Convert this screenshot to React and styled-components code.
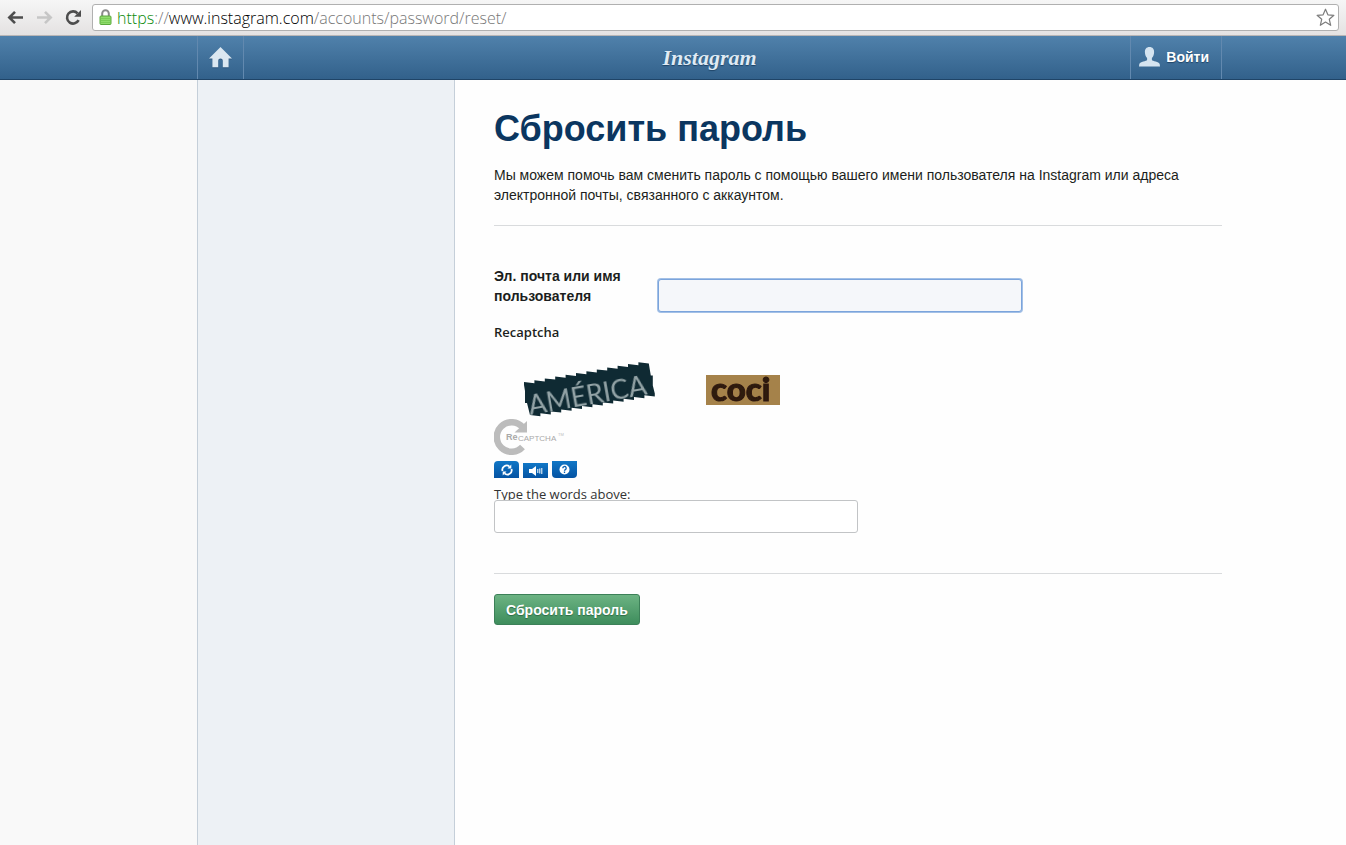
import React, { useState } from 'react';
import styled, { createGlobalStyle } from 'styled-components';

const GlobalStyle = createGlobalStyle`
    * {
        box-sizing: border-box;
    }
    html, body, #root {
        height: 100%;
    }
    body {
        margin: 0;
        color: #1c1e20;
        background-color: #fefefe;
        font-family: 'Liberation Sans', Arial, sans-serif;
        font-size: 14px;
        line-height: 20px;
    }
`;
const Page = styled.div`
    display: flex;
    flex-direction: column;
    min-height: 100%;
`;

/* Browser toolbar */
const Toolbar = styled.div`
    display: flex;
    align-items: center;
    height: 36px;
    padding: 0 7px;
    background: linear-gradient(#f6f6f6, #e4e2e2);
    border-bottom: 1px solid #b9b6b6;
`;
const ToolGroup = styled.div`
    display: flex;
    gap: 12px;
    padding-right: 10px;
`;
const ToolButton = styled.button`
    display: flex;
    width: 17px;
    height: 17px;
    padding: 0;
    border: 0;
    background: none;
    color: ${(props) => (props.disabled ? '#c6c6c6' : '#4d4d4d')};
`;
const AddressBar = styled.div`
    display: flex;
    flex: 1;
    align-items: center;
    height: 27px;
    padding: 0 3px 0 6px;
    border: 1px solid #b0b0b0;
    border-radius: 3px;
    background-color: #fff;
`;
const Url = styled.div`
    flex: 1;
    padding-left: 5px;
    color: #777;
    font-family: 'Open Sans', 'Noto Sans', sans-serif;
    font-size: 16px;
    font-weight: 300;
`;
const Scheme = styled.span`
    color: #0a8a0a;
`;
const Host = styled.span`
    color: #000;
`;
const StarButton = styled.button`
    display: flex;
    padding: 0;
    border: 0;
    background: none;
`;

/* Site header */
const Header = styled.header`
    display: grid;
    grid-template-columns: minmax(0, 197fr) minmax(0, 1025px) minmax(0, 124fr);
    height: 44px;
    background: linear-gradient(#5081ab, #32618b);
    border-bottom: 1px solid #1f4467;
`;
const Nav = styled.nav`
    display: grid;
    grid-column: 2;
    grid-template-columns: 1fr auto 1fr;
    align-items: center;
`;
const NavLink = styled.a`
    display: flex;
    align-items: center;
    justify-self: ${(props) => (props.$right ? 'end' : 'start')};
    gap: 6px;
    height: 43px;
    padding: ${(props) => (props.$right ? '0 12px 2px 8px' : '0 11px')};
    border: solid #6289af;
    border-width: 0 1px;
    color: #fff;
    font-weight: bold;
    text-decoration: none;
    text-shadow: 0 1px 1px #1f4467;
`;
const Brand = styled.a`
    color: #dfeaf4;
    font-family: 'Liberation Serif', 'Times New Roman', serif;
    font-size: 22px;
    font-style: italic;
    font-weight: bold;
    line-height: 36px;
    text-decoration: none;
    text-shadow: 0 1px 1px #1f4467;
`;

/* Columns */
const Body = styled.div`
    display: grid;
    flex: 1;
    grid-template-columns: minmax(0, 197fr) minmax(0, 258px) minmax(0, 767px) minmax(0, 124fr);
`;
const Gutter = styled.div`
    background-color: #f9f9f9;
`;
const Sidebar = styled.aside`
    border: solid #c5cfd9;
    border-width: 0 1px;
    background-color: #edf1f5;
`;
const Main = styled.main`
    padding: 29px 0 40px 39px;
`;
const Title = styled.h1`
    margin: 0 0 16px;
    color: #0b3660;
    font-size: 36px;
    line-height: 40px;
`;
const Intro = styled.p`
    margin: 0;
`;
const Form = styled.form`
    margin-top: 20px;
    border-top: 1px solid #d9dbdd;
`;
const Fields = styled.div`
    display: flex;
    flex-direction: column;
    padding: 40px 0;
    border-bottom: 1px solid #d9dbdd;
`;
const FieldRow = styled.div`
    display: grid;
    grid-template-columns: 164px minmax(0, 364px);
    margin-bottom: 10px;
`;
const Label = styled.label`
    padding-right: 24px;
    font-weight: bold;
`;
const Input = styled.input`
    width: 100%;
    max-width: 364px;
    height: 33px;
    padding: 0 8px;
    border: 1px solid #c2c4c6;
    border-radius: 3px;
    background-color: #fff;
    font: inherit;
    outline: 0;
`;
const MainInput = styled(Input)`
    margin-top: 13px;
    border-color: #7ba4dc;
    background-color: #f5f7fa;
    box-shadow: 0 0 0 1px #a3c0e6;
`;
const CaptchaTitle = styled.div`
    font-family: 'Open Sans', sans-serif;
    font-size: 13px;
    font-weight: 600;
`;
const CaptchaImage = styled.svg`
    display: block;
    margin-top: 18px;
`;
const CaptchaLogo = styled.svg`
    display: block;
    margin-top: 2px;
`;
const CaptchaTools = styled.div`
    display: flex;
    align-items: flex-end;
    gap: 4px;
    margin-top: 6px;
`;
const CaptchaButton = styled.button`
    display: flex;
    align-items: center;
    justify-content: center;
    width: 25px;
    height: ${(props) => (props.$short ? '15px' : '17px')};
    padding: 0;
    border: 0;
    border-radius: ${(props) => props.$radius || '0'};
    background: linear-gradient(#1177c6, #0453a3);
`;
const CaptchaLabel = styled.label`
    height: 15px;
    margin-top: 7px;
    color: #333;
    font-family: 'Open Sans', sans-serif;
    font-size: 13px;
    line-height: 18px;
`;
const Submit = styled.button`
    height: 31px;
    margin-top: 20px;
    padding: 0 11px;
    border: 1px solid #3c8058;
    border-radius: 3px;
    background: linear-gradient(#6cb383, #3e8d5c);
    color: #fff;
    font: bold 14px 'Liberation Sans', Arial, sans-serif;
    text-shadow: 0 1px 1px #2c6b45;
`;

function BackIcon({ flip }) {
    return (
        <svg width="17" height="17" viewBox="0 0 17 17" fill="none" stroke="currentColor" strokeWidth="2.6">
            <path d={flip ? 'M1 8.5h13M9 2.8l5.7 5.7L9 14.2' : 'M16 8.5H3M8 2.8L2.3 8.5 8 14.2'} />
        </svg>
    );
}

function ReloadIcon() {
    return (
        <svg width="17" height="17" viewBox="0 0 17 17">
            <path d="M13.6 11.2A6.1 6.1 0 1 1 12.6 4.3" fill="none" stroke="currentColor" strokeWidth="2.6" />
            <path d="M16 1v6.8H9.2z" fill="currentColor" />
        </svg>
    );
}

function LockIcon() {
    return (
        <svg width="13" height="17" viewBox="0 0 13 17">
            <path d="M3.2 8V4.6a3.3 3.3 0 0 1 6.6 0V8" fill="none" stroke="#8b8b8b" strokeWidth="2" />
            <rect x="1" y="7" width="11" height="8.5" rx="1" fill="#8fdc6c" stroke="#5aa83c" />
            <path d="M2 9.5h9M2 11.5h9M2 13.5h9" stroke="#70c44e" strokeWidth=".7" />
        </svg>
    );
}

function StarIcon() {
    return (
        <svg width="19" height="19" viewBox="0 0 19 19">
            <path
                d="M9.5 1.2l2.4 5.6 6 .5-4.6 4 1.4 6-5.2-3.2-5.2 3.2 1.4-6-4.6-4 6-.5z"
                fill="#fff"
                stroke="#7c7c7c"
                strokeWidth="1.2"
                strokeLinejoin="round"
            />
        </svg>
    );
}

function HomeIcon() {
    return (
        <svg width="23" height="22" viewBox="0 0 23 22">
            <path d="M11.5 1L0 12.5h3.4V21.200h5.800v-6.400a2.300 2.300 0 0 1 4.600 0v6.400h5.800v-8.700H23z" fill="#1f4467" opacity=".5" />
            <path d="M11.5 0L0 11.5h3.4V20.2h5.8v-6.4a2.3 2.3 0 0 1 4.6 0v6.4h5.8v-8.7H23z" fill="#dbe7f1" />
        </svg>
    );
}

function UserIcon() {
    return (
        <svg width="21" height="20" viewBox="0 0 21 20">
            <path
                d="M10.5 0C7.3 0 5.8 2.2 5.9 5.2c.1 2.6 1 4.5 2.2 5.8v2C7.6 14.3 1 14.6.3 17L0 19.4h21l-.3-2.4c-.7-2.4-7.3-2.7-7.8-4v-2c1.2-1.3 2.1-3.2 2.2-5.8C15.2 2.2 13.7 0 10.5 0z"
                fill="#d5e4f0"
            />
        </svg>
    );
}

// the strip is cut in twelve teeth on both long sides
const strip = `M30 25${'v-3l10.4 1.2'.repeat(12)}l2 12h2v10l2 8${'v3l-10.4-1.200'.repeat(12)}l-3-12h-2v-12z`;

function Captcha() {
    return (
        <CaptchaImage width="300" height="57" viewBox="0 0 300 57" role="img" aria-label="Recaptcha challenge">
            <defs>
                <filter id="soft">
                    <feGaussianBlur stdDeviation="0.7" />
                </filter>
            </defs>
            <path d={strip} fill="#0f2a33" />
            <g transform="translate(36 55) rotate(-10)">
                <text fill="#93a3a6" fontFamily="Lato" fontSize="27" filter="url(#soft)">
                    AMÉRICA
                </text>
            </g>
            <rect x="212" y="15" width="74" height="30" fill="#a5824a" />
            <text x="217" y="41" fill="#2e1a10" stroke="#2e1a10" fontFamily="Lato" fontSize="33" fontWeight="900" filter="url(#soft)">
                coci
            </text>
        </CaptchaImage>
    );
}

function RecaptchaLogo() {
    return (
        <CaptchaLogo width="72" height="36" viewBox="0 0 72 36" role="img" aria-label="reCAPTCHA">
            <path d="M28.5 8A14.8 14.8 0 1 0 28.5 28" fill="none" stroke="#bcbcbc" strokeWidth="6.5" />
            <path d="M33 2v11.5H20.5z" fill="#bcbcbc" />
            <text x="12" y="21" fill="#a9a9a9" fontFamily="Liberation Sans" fontSize="9" fontWeight="bold">
                Re
            </text>
            <text x="24" y="22" fill="#a9a9a9" fontFamily="Liberation Sans Narrow, Liberation Sans" fontSize="8">
                CAPTCHA
            </text>
            <text x="64" y="17" fill="#bcbcbc" fontFamily="Liberation Sans" fontSize="4">
                TM
            </text>
        </CaptchaLogo>
    );
}

function App() {
    const [user, setUser] = useState('');
    const [words, setWords] = useState('');
    return (
        <>
            <GlobalStyle />
            <Page>
                <Toolbar>
                    <ToolGroup>
                        <ToolButton type="button" aria-label="Back">
                            <BackIcon />
                        </ToolButton>
                        <ToolButton type="button" aria-label="Forward" disabled>
                            <BackIcon flip />
                        </ToolButton>
                        <ToolButton type="button" aria-label="Reload">
                            <ReloadIcon />
                        </ToolButton>
                    </ToolGroup>
                    <AddressBar>
                        <LockIcon />
                        <Url>
                            <Scheme>https</Scheme>://<Host>www.instagram.com</Host>/accounts/password/reset/
                        </Url>
                        <StarButton type="button" aria-label="Bookmark">
                            <StarIcon />
                        </StarButton>
                    </AddressBar>
                </Toolbar>
                <Header>
                    <Nav>
                        <NavLink href="#home" aria-label="Home">
                            <HomeIcon />
                        </NavLink>
                        <Brand href="#instagram">Instagram</Brand>
                        <NavLink href="#login" $right>
                            <UserIcon />
                            Войти
                        </NavLink>
                    </Nav>
                </Header>
                <Body>
                    <Gutter />
                    <Sidebar />
                    <Main>
                        <Title>Сбросить пароль</Title>
                        <Intro>
                            Мы можем помочь вам сменить пароль с помощью вашего имени пользователя на Instagram или адреса
                            электронной почты, связанного с аккаунтом.
                        </Intro>
                        <Form onSubmit={(e) => e.preventDefault()}>
                            <Fields>
                                <FieldRow>
                                    <Label htmlFor="user">Эл. почта или имя пользователя</Label>
                                    <MainInput id="user" value={user} onChange={(e) => setUser(e.target.value)} />
                                </FieldRow>
                                <CaptchaTitle>Recaptcha</CaptchaTitle>
                                <Captcha />
                                <RecaptchaLogo />
                                <CaptchaTools>
                                    <CaptchaButton type="button" aria-label="New challenge" $radius="4px 4px 0 0">
                                        <svg width="12" height="12" viewBox="0 0 12 12" fill="none" stroke="#fff" strokeWidth="1.8">
                                            <path d="M1.5 7A4.3 4.3 0 0 1 8.5 2.6M10.5 5A4.3 4.3 0 0 1 3.5 9.4" />
                                            <path d="M10.3.5v4H6.5zM1.7 11.5v-4h3.8z" fill="#fff" stroke="none" />
                                        </svg>
                                    </CaptchaButton>
                                    <CaptchaButton type="button" aria-label="Audio challenge" $short>
                                        <svg width="14" height="10" viewBox="0 0 14 10">
                                            <path d="M0 3h3l4-3v10L3 7H0z" fill="#fff" />
                                            <path d="M8.8 3v4M10.8 2.5v5M12.8 2v6" stroke="#fff" />
                                        </svg>
                                    </CaptchaButton>
                                    <CaptchaButton type="button" aria-label="Help" $radius="0 0 4px 4px">
                                        <svg width="11" height="11" viewBox="0 0 11 11">
                                            <circle cx="5.5" cy="5.5" r="5" fill="#fff" />
                                            <path d="M3.8 4.3a1.7 1.7 0 1 1 2.6 1.3c-.6.4-.9.6-.9 1.2M5.5 7.6v1.3" fill="none" stroke="#0a62b2" strokeWidth="1.3" />
                                        </svg>
                                    </CaptchaButton>
                                </CaptchaTools>
                                <CaptchaLabel htmlFor="words">Type the words above:</CaptchaLabel>
                                <Input id="words" value={words} onChange={(e) => setWords(e.target.value)} />
                            </Fields>
                            <Submit type="submit">Сбросить пароль</Submit>
                        </Form>
                    </Main>
                </Body>
            </Page>
        </>
    );
}

export default App;
